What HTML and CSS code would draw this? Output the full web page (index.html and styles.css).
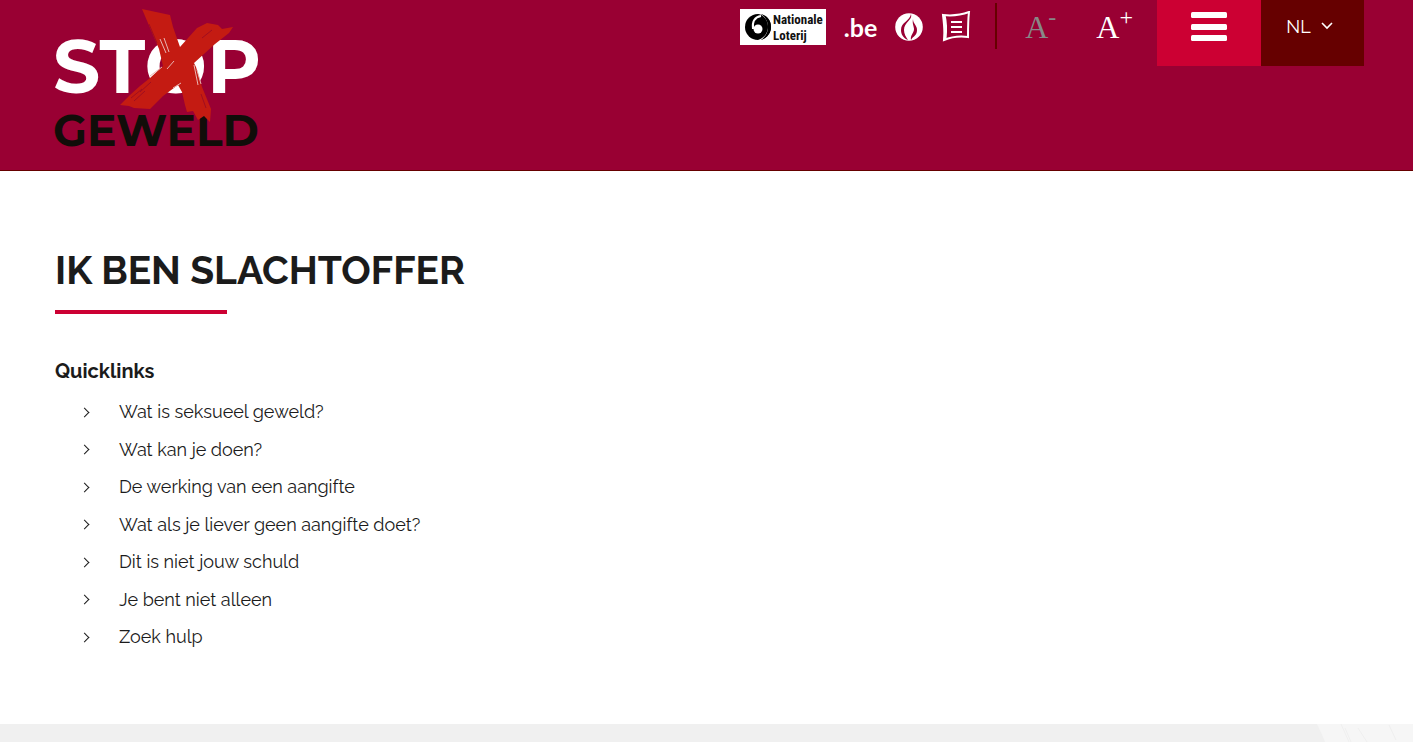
FILE: index.html
```html
<!DOCTYPE html>
<html lang="nl">
<head>
<meta charset="utf-8">
<meta name="viewport" content="width=device-width, initial-scale=1">
<title>Ik ben slachtoffer - Stop geweld</title>
<link rel="stylesheet" href="styles.css">
</head>
<body>
<header class="site-header">
  <a class="brand" href="#" aria-label="Stop geweld">
    <svg class="brand-logo" width="208" height="148" viewBox="0 0 208 148">
      <text class="logo-stop" x="-2" y="93">STOP</text>
      <text class="logo-geweld" x="-2" y="146">GEWELD</text>
      <path class="logo-cross" d="M87 9 115 15 118 27 125 47 142 28 152 23 163 25 167 29 178 27 174 33 160 44 139 63 141 67 147 87 156 109 155 122 149 116 143 120 138 111 132 112 130 105 127 92 123 85 108 96 95 109 79 108 74 106 65 105 75 95 85 86 95 78 108 66 104 49Z"/>
      <path class="logo-streak" d="M105 39 111 53M109 38 114 52M112 69 119 61M95 76 107 67M118 88 126 83M139 65 143 85M142 70 146 84"/>
      <path class="logo-gap" d="M94 24 102 43M79 101 90 91M146 94 151 108M147 38 157 30M76 98 87 89M85 92 96 82"/>
    </svg>
  </a>
  <div class="tools">
    <nav class="partners" aria-label="Partners">
      <a href="#" aria-label="Nationale Loterij">
        <svg width="86" height="36" viewBox="0 0 86 36">
          <rect width="86" height="36" fill="#fff"/>
          <circle cx="18" cy="18" r="13" fill="#000"/>
          <path d="M19 5c6 2 9 7 9 13s-4 11-10 13c-2 1 10 1 12-13C30 9 25 5 19 5Z" fill="#fff"/>
          <path d="M21 5c7 2 10 7 10 13s-4 11-10 13c4-3 7-7 7-13s-3-10-7-13Z" fill="#000"/>
          <circle cx="18" cy="20" r="4.500" fill="#fff"/>
          <path d="M21 7c-6 1-9 5-8 13" fill="none" stroke="#fff" stroke-width="2"/>
          <text class="lottery-text" x="33" y="15">Nationale</text>
          <text class="lottery-text" x="33" y="31">Loterij</text>
        </svg>
      </a>
      <a class="be-link" href="#">.be</a>
      <a href="#" aria-label="Vlaamse Gemeenschap">
        <svg width="28" height="28" viewBox="0 0 28 28">
          <circle cx="14" cy="14" r="13.800" fill="#fff"/>
          <path d="M16 1c2 6-7 8-7 16 0 4 2 7 4 10-5-2-7-6-7-10C6 9 15 8 16 1Z" fill="#903"/>
          <path d="M18 6c0 5 4 6 4 11 0 6-4 6-6 10-1-5 3-7 3-11 0-3-2-5-1-10Z" fill="#903"/>
        </svg>
      </a>
      <a href="#" aria-label="Federatie">
        <svg width="30" height="32" viewBox="0 0 30 32" fill="none" stroke="#fff">
          <path d="M2 4c9 1 18 0 26-3-1 8-1 17-1 25-8-1-17 0-24 3 1-8 0-17-1-25Z" stroke-width="2"/>
          <path d="M3 4c2 8 2 15 1 24" stroke-width="3"/>
          <path d="M10 11h11M10 16h11M10 21h11" stroke-width="2"/>
        </svg>
      </a>
    </nav>
    <div class="text-size">
      <button class="size-button size-down" type="button" aria-label="Kleinere tekst">A<span class="size-mark">-</span></button>
      <button class="size-button" type="button" aria-label="Grotere tekst">A<span class="size-mark">+</span></button>
    </div>
    <button class="menu-button" type="button" aria-label="Menu">
      <svg width="36" height="30" viewBox="0 0 36 30" fill="#fff"><rect y="0" width="36" height="6" rx="1.500"/><rect y="12" width="36" height="6" rx="1.500"/><rect y="23" width="36" height="6" rx="1.500"/></svg>
    </button>
    <button class="language-button" type="button">NL
      <svg width="12" height="8" viewBox="0 0 12 8" fill="none" stroke="#fff" stroke-width="1.600"><path d="M1 1 6 6 11 1"/></svg>
    </button>
  </div>
</header>
<main class="content">
  <h1 class="title">IK BEN SLACHTOFFER</h1>
  <h2 class="subtitle">Quicklinks</h2>
  <ul class="quicklinks">
    <li><a href="#">Wat is seksueel geweld?</a></li>
    <li><a href="#">Wat kan je doen?</a></li>
    <li><a href="#">De werking van een aangifte</a></li>
    <li><a href="#">Wat als je liever geen aangifte doet?</a></li>
    <li><a href="#">Dit is niet jouw schuld</a></li>
    <li><a href="#">Je bent niet alleen</a></li>
    <li><a href="#">Zoek hulp</a></li>
  </ul>
</main>
<footer class="site-footer">
  <svg width="96" height="18" viewBox="0 0 96 18">
    <path d="M0 0H96V18H8Q5 10 0 0Z" fill="#f6f6f6"/>
    <path d="M24 0 32 18M28 4 34 18M72 1 79 16M41 4 50 18" stroke="#efefef" fill="none"/>
  </svg>
</footer>
</body>
</html>
```
FILE: styles.css
```css
* { box-sizing: border-box; }

body {
  margin: 0;
  background: #fff;
  color: #1b1b1b;
  font-family: Raleway, Lato, sans-serif;
}

a { color: inherit; text-decoration: none; }

button {
  border: 0;
  padding: 0;
  background: none;
  color: #fff;
  font: inherit;
  cursor: pointer;
}

svg { display: block; }

.site-header {
  display: flex;
  justify-content: space-between;
  align-items: flex-start;
  min-height: 171px;
  padding: 0 49px 0 55px;
  background: #903;
  border-bottom: 1px solid #600;
}

.brand-logo { overflow: visible; }
.logo-stop { font: 700 74px Montserrat, Raleway, sans-serif; fill: #fff; }
.logo-geweld { font: 700 44px Montserrat, Raleway, sans-serif; fill: #110d09; }
.logo-cross { fill: #c41b12; }
.logo-streak { fill: none; stroke: #e8b5b3; stroke-width: 1; }
.logo-gap { fill: none; stroke: #a00d20; stroke-width: 1; }

.tools { display: flex; align-items: flex-start; }

.partners {
  display: flex;
  align-items: center;
  gap: 18px;
  height: 46px;
  margin-top: 3px;
  padding: 2px 24px 0 0;
  border-right: 2px solid #600;
}

.lottery-text { font: bold 13px "Roboto Condensed", "Open Sans Condensed", Lato, sans-serif; fill: #111; }
.be-link { color: #fff; font: bold 25px/32px Lato, sans-serif; }

.text-size { display: flex; gap: 40px; padding: 9px 24px 0 28px; }
.size-button {
  display: flex;
  align-items: flex-start;
  font: 32px/36px "Liberation Serif", serif;
}
.size-down { color: #888; }
.size-mark { font-size: 24px; line-height: 16px; }

.menu-button {
  display: flex;
  justify-content: center;
  width: 104px;
  height: 66px;
  padding-top: 12px;
  background: #c03;
}

.language-button {
  display: flex;
  justify-content: center;
  align-items: center;
  gap: 10px;
  width: 103px;
  height: 66px;
  padding: 0 6px 14px 0;
  background: #600;
  font-size: 18px;
}

.content { padding: 75px 55px 60px; }

.title {
  margin: 0;
  font-size: 39px;
  line-height: 48px;
  font-weight: 700;
}
.title::after {
  content: "";
  display: block;
  width: 172px;
  height: 4px;
  margin-top: 16px;
  background: #c03;
}

.subtitle {
  margin: 44px 0 17px;
  font-size: 20px;
  line-height: 26px;
  font-weight: 700;
}

.quicklinks { margin: 0; padding: 0; list-style: none; font-size: 18px; font-weight: 400; line-height: 1.25; }
.quicklinks li { display: flex; align-items: center; padding-bottom: 15px; }
.quicklinks li::before {
  content: "";
  width: 6px;
  height: 6px;
  margin: 0 31px 0 26px;
  border: solid #1b1b1b;
  border-width: 1px 1px 0 0;
  transform: rotate(45deg);
}

.site-footer { display: flex; justify-content: flex-end; background: #f0f0f0; }
```
